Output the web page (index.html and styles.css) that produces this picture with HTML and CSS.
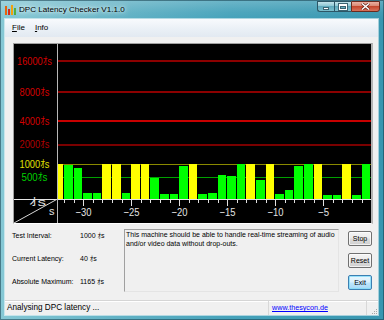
FILE: index.html
```html
<!DOCTYPE html>
<html>
<head>
<meta charset="utf-8">
<title>DPC Latency Checker V1.1.0</title>
<link rel="stylesheet" href="styles.css">
</head>
<body>
<div class="window">
  <div class="titlebar">
    <svg class="app-icon" width="11" height="11" viewBox="0 0 11 11">
      <rect class="ic-a" x="0" y="2" width="2" height="9"/>
      <rect class="ic-b" x="3" y="5" width="2" height="6"/>
      <rect class="ic-c" x="6" y="1" width="2" height="10"/>
      <rect class="ic-d" x="9" y="4" width="2" height="7"/>
    </svg>
    <span class="title">DPC Latency Checker V1.1.0</span>
    <div class="caption-buttons">
      <div class="cbtn cbtn-min"><span class="glyph-min"></span></div>
      <div class="cbtn cbtn-max"><span class="glyph-max"></span></div>
      <div class="cbtn cbtn-close">
        <svg width="9" height="7" viewBox="0 0 9 7">
          <path class="x-out" d="M1 0.5 L8 6.5 M8 0.5 L1 6.5"/>
          <path class="x-in" d="M1 0.5 L8 6.5 M8 0.5 L1 6.5"/>
        </svg>
      </div>
    </div>
  </div>

  <div class="client">
    <div class="menubar">
      <span class="menu"><span class="mn">F</span>ile</span>
      <span class="menu"><span class="mn">I</span>nfo</span>
    </div>

    <div class="content">
      <div class="chart-panel">
        <svg class="plot" width="357" height="179" viewBox="0 0 357 179">
          <!-- level lines -->
          <rect class="l-red-dk" x="44" y="16" width="313" height="2"/>
          <rect class="l-red-dk" x="44" y="47" width="313" height="2"/>
          <rect class="l-red" x="44" y="76" width="313" height="2"/>
          <rect class="l-red-dk2" x="44" y="100" width="313" height="2"/>
          <rect class="l-olive" x="44" y="120" width="313" height="1"/>
          <rect class="l-green" x="44" y="133" width="313" height="1"/>

          <!-- level labels -->
          <text class="ylab c-red" x="20.5" y="21" text-anchor="middle" textLength="35" lengthAdjust="spacingAndGlyphs">16000ｵs</text>
          <text class="ylab c-red" x="20.5" y="52" text-anchor="middle" textLength="30" lengthAdjust="spacingAndGlyphs">8000ｵs</text>
          <text class="ylab c-red" x="20.5" y="81" text-anchor="middle" textLength="30" lengthAdjust="spacingAndGlyphs">4000ｵs</text>
          <text class="ylab c-red2" x="20.5" y="104" text-anchor="middle" textLength="30" lengthAdjust="spacingAndGlyphs">2000ｵs</text>
          <text class="ylab c-yel" x="20.5" y="124" text-anchor="middle" textLength="30" lengthAdjust="spacingAndGlyphs">1000ｵs</text>
          <text class="ylab c-grn" x="20.5" y="137" text-anchor="middle" textLength="26" lengthAdjust="spacingAndGlyphs">500ｵs</text>

          <!-- bars -->
          <rect class="bar-y" x="44" y="120" width="5" height="35"/>
          <rect class="bar-g" x="50" y="121" width="9" height="34"/>
          <rect class="bar-g" x="60" y="124" width="8" height="31"/>
          <rect class="bar-g" x="69" y="149" width="9" height="6"/>
          <rect class="bar-g" x="79" y="149" width="8" height="6"/>
          <rect class="bar-y" x="88" y="120" width="9" height="35"/>
          <rect class="bar-y" x="98" y="120" width="9" height="35"/>
          <rect class="bar-g" x="108" y="149" width="8" height="6"/>
          <rect class="bar-y" x="117" y="120" width="9" height="35"/>
          <rect class="bar-y" x="127" y="120" width="8" height="35"/>
          <rect class="bar-g" x="136" y="134" width="9" height="21"/>
          <rect class="bar-g" x="146" y="150" width="9" height="5"/>
          <rect class="bar-g" x="156" y="150" width="8" height="5"/>
          <rect class="bar-g" x="165" y="122" width="9" height="33"/>
          <rect class="bar-y" x="175" y="120" width="8" height="35"/>
          <rect class="bar-g" x="184" y="150" width="9" height="5"/>
          <rect class="bar-g" x="194" y="149" width="9" height="6"/>
          <rect class="bar-g" x="204" y="131" width="8" height="24"/>
          <rect class="bar-g" x="213" y="132" width="9" height="23"/>
          <rect class="bar-g" x="223" y="120" width="8" height="35"/>
          <rect class="bar-y" x="232" y="120" width="9" height="35"/>
          <rect class="bar-g" x="242" y="136" width="9" height="19"/>
          <rect class="bar-y" x="252" y="120" width="8" height="35"/>
          <rect class="bar-g" x="261" y="150" width="9" height="5"/>
          <rect class="bar-g" x="271" y="146" width="8" height="9"/>
          <rect class="bar-g" x="280" y="122" width="9" height="33"/>
          <rect class="bar-g" x="290" y="120" width="9" height="35"/>
          <rect class="bar-y" x="300" y="120" width="8" height="35"/>
          <rect class="bar-g" x="309" y="151" width="9" height="4"/>
          <rect class="bar-g" x="319" y="151" width="8" height="4"/>
          <rect class="bar-y" x="328" y="120" width="9" height="35"/>
          <rect class="bar-g" x="338" y="151" width="9" height="4"/>
          <rect class="bar-g" x="348" y="120" width="8" height="35"/>

          <!-- axes -->
          <rect class="axis" x="0" y="155" width="357" height="1"/>
          <rect class="vline" x="43" y="0" width="1" height="179"/>
          <line class="diag" x1="0" y1="179" x2="43.5" y2="155"/>

          <!-- ticks -->
          <rect class="tick" x="50" y="156" width="1" height="3"/>
          <rect class="tick" x="60" y="156" width="1" height="3"/>
          <rect class="tick" x="69" y="156" width="1" height="6"/>
          <rect class="tick" x="79" y="156" width="1" height="3"/>
          <rect class="tick" x="88" y="156" width="1" height="3"/>
          <rect class="tick" x="98" y="156" width="1" height="3"/>
          <rect class="tick" x="108" y="156" width="1" height="3"/>
          <rect class="tick" x="117" y="156" width="1" height="6"/>
          <rect class="tick" x="127" y="156" width="1" height="3"/>
          <rect class="tick" x="136" y="156" width="1" height="3"/>
          <rect class="tick" x="146" y="156" width="1" height="3"/>
          <rect class="tick" x="156" y="156" width="1" height="3"/>
          <rect class="tick" x="165" y="156" width="1" height="6"/>
          <rect class="tick" x="175" y="156" width="1" height="3"/>
          <rect class="tick" x="184" y="156" width="1" height="3"/>
          <rect class="tick" x="194" y="156" width="1" height="3"/>
          <rect class="tick" x="204" y="156" width="1" height="3"/>
          <rect class="tick" x="213" y="156" width="1" height="6"/>
          <rect class="tick" x="223" y="156" width="1" height="3"/>
          <rect class="tick" x="232" y="156" width="1" height="3"/>
          <rect class="tick" x="242" y="156" width="1" height="3"/>
          <rect class="tick" x="252" y="156" width="1" height="3"/>
          <rect class="tick" x="261" y="156" width="1" height="6"/>
          <rect class="tick" x="271" y="156" width="1" height="3"/>
          <rect class="tick" x="280" y="156" width="1" height="3"/>
          <rect class="tick" x="290" y="156" width="1" height="3"/>
          <rect class="tick" x="300" y="156" width="1" height="3"/>
          <rect class="tick" x="309" y="156" width="1" height="6"/>
          <rect class="tick" x="319" y="156" width="1" height="3"/>
          <rect class="tick" x="328" y="156" width="1" height="3"/>
          <rect class="tick" x="338" y="156" width="1" height="3"/>
          <rect class="tick" x="348" y="156" width="1" height="3"/>

          <!-- tick labels -->
          <text class="xlab" x="69.5" y="172" text-anchor="middle" textLength="16" lengthAdjust="spacingAndGlyphs">−30</text>
          <text class="xlab" x="117.5" y="172" text-anchor="middle" textLength="16" lengthAdjust="spacingAndGlyphs">−25</text>
          <text class="xlab" x="165.5" y="172" text-anchor="middle" textLength="16" lengthAdjust="spacingAndGlyphs">−20</text>
          <text class="xlab" x="213.5" y="172" text-anchor="middle" textLength="16" lengthAdjust="spacingAndGlyphs">−15</text>
          <text class="xlab" x="261.5" y="172" text-anchor="middle" textLength="16" lengthAdjust="spacingAndGlyphs">−10</text>
          <text class="xlab" x="309.5" y="172" text-anchor="middle" textLength="11" lengthAdjust="spacingAndGlyphs">−5</text>

          <!-- corner units -->
          <text class="xlab" x="15" y="162" textLength="17" lengthAdjust="spacingAndGlyphs">ｵs</text>
          <text class="xlab" x="35" y="171">s</text>
        </svg>
      </div>

      <div class="lower">
        <div class="info">
          <span class="lbl">Test Interval:</span><span class="val">1000 ｵs</span>
          <span class="lbl">Current Latency:</span><span class="val">40 ｵs</span>
          <span class="lbl">Absolute Maximum:</span><span class="val">1165 ｵs</span>
        </div>
        <div class="message">This machine should be able to handle real-time streaming of audio and/or video data without drop-outs.</div>
        <div class="buttons">
          <div class="btn">Stop</div>
          <div class="btn">Reset</div>
          <div class="btn btn-default">Exit</div>
        </div>
      </div>
    </div>

    <div class="statusbar">
      <div class="status-main">Analysing DPC latency ...</div>
      <div class="status-link"><span class="link">www.thesycon.de</span></div>
      <div class="status-grip">
        <svg width="7" height="7" viewBox="0 0 7 7">
          <rect class="grip" x="5" y="1" width="1" height="1"/>
          <rect class="grip" x="3" y="3" width="1" height="1"/>
          <rect class="grip" x="5" y="3" width="1" height="1"/>
          <rect class="grip" x="1" y="5" width="1" height="1"/>
          <rect class="grip" x="3" y="5" width="1" height="1"/>
          <rect class="grip" x="5" y="5" width="1" height="1"/>
        </svg>
      </div>
    </div>
  </div>
</div>
</body>
</html>
```

FILE: styles.css
```css
* { box-sizing: border-box; }

html, body {
  margin: 0;
  padding: 0;
}

body {
  width: 384px;
  height: 320px;
  overflow: hidden;
  background: #ffffff;
  font-family: "Liberation Sans", "Noto Sans CJK JP", Arial, sans-serif;
  color: #000;
}

/* ---------- window frame ---------- */
.window {
  width: 384px;
  height: 320px;
  display: flex;
  flex-direction: column;
  overflow: hidden;
  background:
    linear-gradient(to bottom, rgba(255,255,255,0.22) 0px, rgba(255,255,255,0.05) 12px, rgba(255,255,255,0) 19px),
    linear-gradient(to right, #86c8d5 0%, #62b2c5 30%, #45a2ba 60%, #3896b0 100%);
  box-shadow: inset 0 0 0 1px rgba(20, 60, 75, 0.55);
}

.titlebar {
  height: 19px;
  flex: none;
  display: flex;
  align-items: flex-start;
  padding-left: 5px;
}

.app-icon {
  flex: none;
  margin-top: 4px;
  margin-right: 3px;
}
.ic-a { fill: #e8620a; }
.ic-b { fill: #d42a1e; }
.ic-c { fill: #f3a10c; }
.ic-d { fill: #4cae3a; }

.title {
  font-size: 8.1px;
  line-height: 19px;
  white-space: nowrap;
  color: #000;
  text-shadow: 0 0 3px #e8f8fb, 0 0 6px #e8f8fb, 0 0 9px rgba(235,250,252,0.9);
}

.caption-buttons {
  margin-left: auto;
  margin-right: 4px;
  margin-top: 1px;
  display: flex;
  height: 11px;
  flex: none;
}

.cbtn {
  height: 11px;
  display: flex;
  align-items: center;
  justify-content: center;
  border: 1px solid #2c5666;
}

.cbtn-min,
.cbtn-max {
  width: 17px;
  border-right: none;
  background: linear-gradient(to bottom, #c2e3ea 0%, #8cc6d3 45%, #5ea9bc 50%, #7cbfcd 100%);
}

.cbtn-min { border-radius: 0 0 0 3px; }

.cbtn-close {
  width: 29px;
  border-radius: 0 0 3px 0;
  border-color: #6a2a1e;
  background: linear-gradient(to bottom, #eab0a2 0%, #d98772 45%, #c5482e 50%, #d7715a 100%);
}

.glyph-min {
  width: 6px;
  height: 3px;
  margin-top: 4px;
  background: #fff;
  border: 1px solid #3b6472;
}

.glyph-max {
  width: 8px;
  height: 6px;
  border: 1px solid #fff;
  border-top-width: 2px;
  box-shadow: 0 0 0 1px #3b6472, inset 0 0 0 1px #3b6472;
}

.x-out { stroke: #5a1f14; stroke-width: 2.8; fill: none; }
.x-in { stroke: #ffffff; stroke-width: 1.5; fill: none; }

/* ---------- client ---------- */
.client {
  flex: 1;
  margin: 0 6px 5px 5px;
  background: #f0f0f0;
  display: flex;
  flex-direction: column;
  box-shadow: 0 0 0 1px rgba(255,255,255,0.55);
}

.menubar {
  height: 18px;
  flex: none;
  display: flex;
  padding-left: 2px;
  background: linear-gradient(to bottom, #f8fafd 0%, #eaf0f6 55%, #e2e9f1 100%);
  font-size: 8px;
  line-height: 18px;
}

.menu { padding: 0 5px; }
.mn { text-decoration: underline; }

.content {
  flex: 1;
  padding: 6px 5px 0 8px;
  display: flex;
  flex-direction: column;
}

.chart-panel {
  height: 181px;
  flex: none;
  background: #000;
  border-top: 1px solid #a0a0a0;
  border-left: 1px solid #a0a0a0;
  border-right: 2px solid #b4b4b4;
  border-bottom: 1px solid #ffffff;
}

.plot { display: block; shape-rendering: crispEdges; }

.l-red-dk { fill: #8c0000; }
.l-red { fill: #c80000; }
.l-red-dk2 { fill: #7a0000; }
.l-olive { fill: #8a8a00; }
.l-green { fill: #00a000; }

.bar-y { fill: #ffff00; }
.bar-g { fill: #00ff00; }

.axis { fill: #e6e6e6; }
.vline { fill: #b8b8b8; }
.diag { stroke: #d8d8d8; stroke-width: 1; shape-rendering: auto; }
.tick { fill: #e0e0e0; }

.ylab, .xlab {
  font-family: "Liberation Sans", "Noto Sans CJK JP", sans-serif;
  font-size: 11px;
}
.c-red { fill: #d40000; }
.c-red2 { fill: #b00000; }
.c-yel { fill: #e0e000; }
.c-grn { fill: #00d000; }
.xlab { fill: #e4e4e4; }

/* ---------- lower area ---------- */
.lower {
  height: 76px;
  flex: none;
  display: flex;
  margin-left: -8px;
  margin-right: -5px;
}

.info {
  width: 119px;
  flex: none;
  padding-left: 7px;
  display: grid;
  grid-template-columns: 68px auto;
  grid-auto-rows: 23px;
  align-content: start;
  font-size: 7px;
  line-height: 23px;
  white-space: nowrap;
}

.message {
  width: 215px;
  height: 63px;
  flex: none;
  margin-top: 5px;
  padding: 0 3px 0 1px;
  border: 1px solid;
  border-color: #a0a0a0 #e4e4e4 #e4e4e4 #a0a0a0;
  background: #f0f0f0;
  font-size: 7px;
  line-height: 9px;
}

.buttons {
  width: 24px;
  flex: none;
  margin-left: 9px;
  padding-top: 7px;
  display: flex;
  flex-direction: column;
  gap: 7px;
}

.btn {
  height: 15px;
  border: 1px solid #707070;
  border-radius: 2px;
  background: linear-gradient(to bottom, #f4f4f4 0%, #ebebeb 48%, #dcdcdc 52%, #cfcfcf 100%);
  box-shadow: inset 0 0 0 1px rgba(255,255,255,0.7);
  font-size: 7px;
  line-height: 13px;
  text-align: center;
}

.btn-default {
  border-color: #3c7fb1;
  background: linear-gradient(to bottom, #e9f6fd 0%, #d9f0fc 48%, #bee6fd 52%, #a7d9f5 100%);
  box-shadow: inset 0 0 0 1px rgba(130, 220, 250, 0.8);
}

/* ---------- status bar ---------- */
.statusbar {
  height: 15px;
  flex: none;
  display: flex;
  border-top: 1px solid #d5d5d5;
  box-shadow: inset 0 1px 0 #ffffff;
}

.status-main {
  width: 263px;
  flex: none;
  padding-left: 2px;
  font-size: 8.2px;
  line-height: 14px;
  white-space: nowrap;
}

.status-link {
  width: 98px;
  flex: none;
  padding-left: 3px;
  border-left: 1px solid #d8d8d8;
  font-size: 7.2px;
  line-height: 14px;
  white-space: nowrap;
}

.link {
  color: #0000ff;
  text-decoration: underline;
}

.status-grip {
  flex: 1;
  border-left: 1px solid #d8d8d8;
  display: flex;
  align-items: flex-end;
  justify-content: flex-end;
  padding: 0 0 0 0;
}

.grip { fill: #a8a8a8; }
```
